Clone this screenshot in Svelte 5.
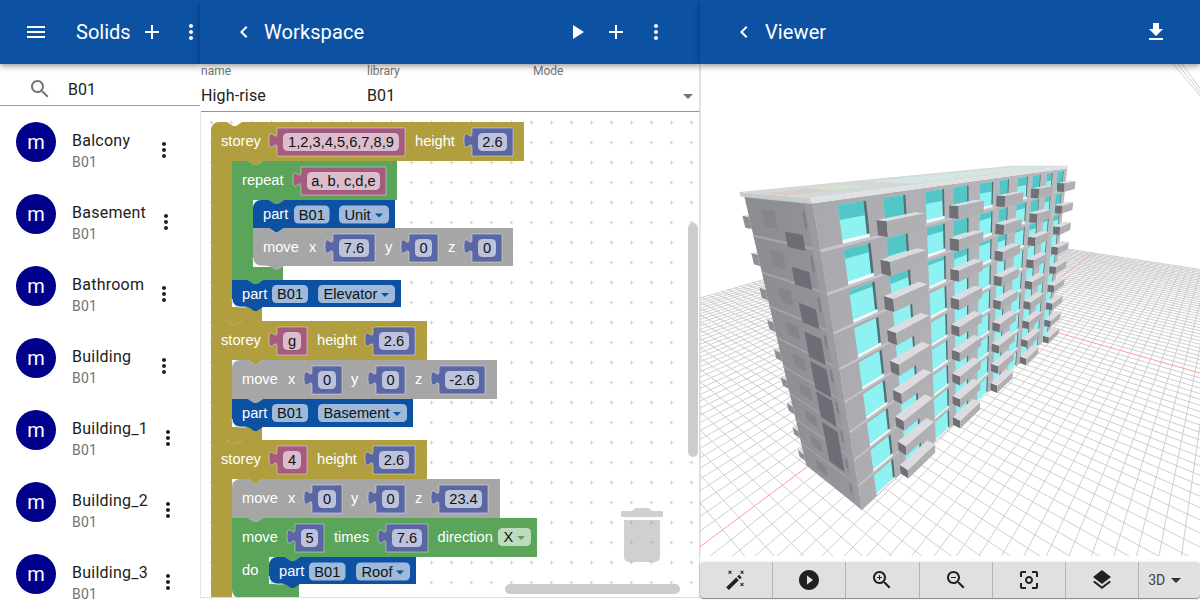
<script>
  const P = {
    menu: 'M3 18h18v-2H3v2zm0-5h18v-2H3v2zm0-7v2h18V6H3z',
    add: 'M19 13h-6v6h-2v-6H5v-2h6V5h2v6h6v2z',
    more: 'M12 8c1.1 0 2-.9 2-2s-.9-2-2-2-2 .9-2 2 .9 2 2 2zm0 2c-1.1 0-2 .9-2 2s.9 2 2 2 2-.9 2-2-.9-2-2-2zm0 6c-1.1 0-2 .9-2 2s.9 2 2 2 2-.9 2-2-.9-2-2-2z',
    back: 'M15.41 7.41L14 6l-6 6 6 6 1.41-1.41L10.83 12z',
    play: 'M8 5v14l11-7z',
    get: 'M19 9h-4V3H9v6H5l7 7 7-7zM5 18v2h14v-2H5z',
    search: 'M15.5 14h-.79l-.28-.27C15.41 12.59 16 11.11 16 9.5 16 5.91 13.09 3 9.5 3S3 5.91 3 9.5 5.91 16 9.5 16c1.61 0 3.09-.59 4.23-1.57l.27.28v.79l5 4.99L20.49 19l-4.99-5zm-6 0C7.01 14 5 11.99 5 9.5S7.01 5 9.5 5 14 7.01 14 9.5 11.99 14 9.5 14z',
    circle: 'M12 2C6.48 2 2 6.48 2 12s4.48 10 10 10 10-4.48 10-10S17.52 2 12 2zm-2 14.5v-9l6 4.5-6 4.5z',
    focus: 'M5 15H3v4c0 1.1.9 2 2 2h4v-2H5v-4zM5 5h4V3H5c-1.1 0-2 .9-2 2v4h2V5zm14-2h-4v2h4v4h2V5c0-1.1-.9-2-2-2zm0 16h-4v2h4c1.1 0 2-.9 2-2v-4h-2v4zM12 8c-2.21 0-4 1.79-4 4s1.79 4 4 4 4-1.79 4-4-1.79-4-4-4zm0 6c-1.1 0-2-.9-2-2s.9-2 2-2 2 .9 2 2-.9 2-2 2z',
    layers: 'M11.99 18.54l-7.37-5.73L3 14.07l9 7 9-7-1.63-1.27-7.38 5.74zM12 16l7.36-5.73L21 9l-9-7-9 7 1.63 1.27L12 16z',
    wand: 'M2.2 19.2l10-9.6 2.6 2.7-10 9.6zM13.2 8.6l1.9-1.8 2.6 2.7-1.9 1.8zM4.9 2.4l1.1 1.1 1.1-1.1.7.7-1.1 1.1 1.1 1.1-.7.7-1.1-1.1-1.1 1.1-.7-.7 1.1-1.1-1.1-1.1zM16.9 2.4l1.1 1.1 1.1-1.1.7.7-1.1 1.1 1.1 1.1-.7.7-1.1-1.1-1.1 1.1-.7-.7 1.1-1.1-1.1-1.1zM16.9 14.7l1.1 1.1 1.1-1.1.7.7-1.1 1.1 1.1 1.1-.7.7-1.1-1.1-1.1 1.1-.7-.7 1.1-1.1-1.1-1.1z'
  };
  const zoomIn = P.search + 'M12 10h-2v2H9v-2H7V9h2V7h1v2h2v1z';
  const zoomOut = P.search + 'M7 9h5v1H7z';
  const tools = [P.wand, P.circle, zoomIn, zoomOut, P.focus, P.layers];
  const solids = ['Balcony', 'Basement', 'Bathroom', 'Building', 'Building_1', 'Building_2', 'Building_3'];

  /* ---------- Blockly canvas ---------- */
  const topEdge = (x, y, w, round) =>
    (round ? `M${x},${y + 8} a8,8 0 0 1 8,-8 h8` : `M${x},${y} h16`) + ` l6,4 3,0 6,-4 H${x + w}`;
  const notch = (x) => `H${x + 31} l-6,4 -3,0 -6,-4`;
  const closeEdge = (x, y, round) => (round ? `H${x + 8} a8,8 0 0 1 -8,-8 Z` : `H${x} Z`);

  const stack = (c, x, y, w, h, rt, rb) => ({
    c, d: `${topEdge(x, y, w, rt)} V${y + h} ${notch(x)} ${closeEdge(x, y + h, rb)}`,
    arc: rb ? `M${x},${y + h - 8} a8,8 0 0 0 8,8 h6` : ''
  });
  const cblock = (c, x, y, w, hdr, ix, iy, fw, fy, rt, rb, foot = true) => ({
    c,
    d: `${topEdge(x, y, w, rt)} V${y + hdr} ${notch(ix)} H${ix} V${iy} H${x + fw} V${fy} ${foot ? notch(x) : ''} ${closeEdge(x, fy, rb)}`,
    arc: ''
  });
  const shapes = [
    cblock('olive', 211, 122, 313, 39, 232, 307, 51, 321, true, false),
    cblock('green', 232, 161, 165, 39, 253, 267, 51, 280, false, false),
    stack('blue', 253, 200, 142, 28, true, false),
    stack('gray', 253, 228, 260, 38, false, true),
    stack('blue', 232, 280, 169, 27, false, true),
    cblock('olive', 211, 321, 216, 39, 232, 427, 51, 440, false, false),
    stack('gray', 232, 360, 265, 39, true, false),
    stack('blue', 232, 399, 181, 28, false, true),
    cblock('olive', 211, 440, 216, 39, 232, 640, 51, 660, false, false),
    stack('gray', 232, 479, 268, 39, true, false),
    cblock('green', 232, 518, 305, 39, 269, 584, 67, 598, false, true, false),
    stack('blue', 269, 557, 147, 27, true, true)
  ];
  const valuePath = (x, y, w) =>
    `M${x},${y} H${x + w} V${y + 28} H${x} V${y + 20} c0,-10 -8,8 -8,-7.5 s8,2.5 8,-7.5 Z`;
  const val = (c, x, y, w, t) => ({ c, x, y, w, t, d: valuePath(x, y, w) });
  const values = [
    val('pink', 277, 128, 128, '1,2,3,4,5,6,7,8,9'), val('purple', 472, 128, 41, '2.6'),
    val('pink', 301, 167, 85, 'a, b, c,d,e'),
    val('purple', 333, 234, 42, '7.6'), val('purple', 409, 234, 29, '0'), val('purple', 472, 234, 30, '0'),
    val('pink', 277, 327, 30, 'g'), val('purple', 373, 327, 42, '2.6'),
    val('purple', 312, 366, 30, '0'), val('purple', 376, 366, 29, '0'), val('purple', 439, 366, 46, '-2.6'),
    val('pink', 277, 446, 30, '4'), val('purple', 373, 446, 42, '2.6'),
    val('purple', 312, 485, 30, '0'), val('purple', 376, 485, 29, '0'), val('purple', 439, 485, 49, '23.4'),
    val('purple', 295, 524, 29, '5'), val('purple', 386, 524, 42, '7.6')
  ];
  const lab = (x, y, t) => ({ x, y, t });
  const labels = [
    lab(221, 146, 'storey'), lab(415, 146, 'height'), lab(242, 185, 'repeat'),
    lab(263, 219, 'part'), lab(263, 252, 'move'), lab(309, 252, 'x'), lab(385, 252, 'y'), lab(448, 252, 'z'),
    lab(242, 299, 'part'), lab(221, 345, 'storey'), lab(317, 345, 'height'),
    lab(242, 384, 'move'), lab(288, 384, 'x'), lab(351, 384, 'y'), lab(415, 384, 'z'), lab(242, 418, 'part'),
    lab(221, 464, 'storey'), lab(317, 464, 'height'),
    lab(242, 503, 'move'), lab(288, 503, 'x'), lab(351, 503, 'y'), lab(415, 503, 'z'),
    lab(242, 542, 'move'), lab(334, 542, 'times'), lab(437.5, 542, 'direction'), lab(242, 575, 'do'), lab(279, 576, 'part')
  ];
  const fld = (c, x, y, w, t, arrow) => ({ c, x, y, w, t, arrow });
  const fields = [
    fld('fblue', 294, 205.5, 35.5, 'B01'), fld('fblue', 339, 205.5, 50, 'Unit', true),
    fld('fblue', 272, 285, 36, 'B01'), fld('fblue', 318, 285, 77, 'Elevator', true),
    fld('fblue', 272, 404, 36, 'B01'), fld('fblue', 318, 404, 89, 'Basement', true),
    fld('fgreen', 498, 528, 33, 'X', true),
    fld('fblue', 309, 562.5, 36.5, 'B01'), fld('fblue', 356, 562.5, 54, 'Roof', true)
  ];

  /* ---------- 3D viewer: projective ground grid ---------- */
  const O = [1006, 318], VA = [1240, 143], VB = [400, 146];
  const N = 40, aL = 0.592, bL = 0.453;
  const gp = (s, t) => {
    const a = (s / N) * aL, b = (t / N) * bL, w = a + b + 1;
    return [(a * VA[0] + b * VB[0] + O[0]) / w, (a * VA[1] + b * VB[1] + O[1]) / w];
  };
  const gridLines = [];
  for (let i = -N; i <= N; i++) {
    if (i === 0) continue;
    const sMin = -N * 0.98;
    gridLines.push([gp(i, sMin), gp(i, N)], [gp(sMin, i), gp(N, i)]);
  }
  const seg = (l) => `M${l[0][0].toFixed(1)},${l[0][1].toFixed(1)}L${l[1][0].toFixed(1)},${l[1][1].toFixed(1)}`;
  const gridD = gridLines.map(seg).join('');
  const redD = seg([gp(0, -N * 0.98), gp(0, N)]) + seg([gp(-N * 0.98, 0), gp(N, 0)]);

  /* ---------- 3D viewer: building ---------- */
  const B0 = [862, 510], BA = [1258, 142], BB = [434, 165], BZ = [966, 1159];
  const ka = 0.905, kb = 0.15, kc = -0.321;
  const pt = (u, v, h) => {
    const w = ka * u + kb * v + kc * h + 1;
    return [
      (ka * u * BA[0] + kb * v * BB[0] + kc * h * BZ[0] + B0[0]) / w,
      (ka * u * BA[1] + kb * v * BB[1] + kc * h * BZ[1] + B0[1]) / w
    ];
  };
  const poly = (list) => list.map((p) => pt(p[0], p[1], p[2]).map((n) => n.toFixed(1)).join(',')).join(' ');
  const faceV = (u0, u1, h0, h1, v = 0) => poly([[u0, v, h0], [u1, v, h0], [u1, v, h1], [u0, v, h1]]);
  const faceU = (v0, v1, h0, h1, u = 0) => poly([[u, v0, h0], [u, v1, h0], [u, v1, h1], [u, v0, h1]]);
  const faceH = (u0, u1, v0, v1, h) => poly([[u0, v0, h], [u1, v0, h], [u1, v1, h], [u0, v1, h]]);

  const cols = [[.043, .095], [.14, .19], [.253, .307], [.345, .398], [.452, .506], [.545, .586], [.642, .697], [.735, .783], [.835, .873], [.92, .965]];
  const F = 9;
  const backB = [], side = [], win = [], bal = [];

  const box = (arr, u0, u1, v0, v1, h0, h1, dark, front, top) => {
    arr.push({ p: faceU(v0, v1, h0, h1, u0), f: dark });
    arr.push({ p: faceV(u0, u1, h0, h1, v0), f: front });
    arr.push({ p: faceH(u0, u1, v0, v1, h1), f: top });
  };
  for (let k = 0; k < F; k++) {
    box(backB, 0.0, 0.09, 1, 1.12, k / F + 0.02, k / F + 0.055, '#8f8f94', '#bcbcc1', '#dedee2');
    const h0 = k / F, h1 = (k + 1) / F;
    side.push({ p: faceU(0.55, 0.75, h0 + 0.035, h1 - 0.03), f: '#85868c' });
    side.push({ p: faceU(0.12, 0.15, h0 + 0.05, h1 - 0.02), f: '#7d7e84' });
    side.push({ p: faceU(0, 1, h1 - 0.003, h1 + 0.004), f: '#a4a5aa' });
  }
  const dark = [[.88, .92], [.775, .825], [.66, .72], [.545, .63], [.43, .53], [.32, .42], [.21, .30], [.13, .21]];
  dark.forEach((d) => side.push({ p: faceU(0.2, 0.45, d[0], d[1]), f: '#6c6d75' }));

  cols.forEach((c, i) => {
    for (let k = 0; k < F; k++) {
      const h0 = k / F + 0.014, h1 = (k + 1) / F - 0.012;
      win.push({ p: faceV(c[0], c[1], h0, h1), f: '#8ef2f3' });
      const depth = k >= 6 ? (k - 5) * (i % 2 ? 0.3 : 0.14) : 0;
      if (depth) win.push({ p: faceV(c[0], c[1], h1 - (h1 - h0) * depth, h1), f: '#53c6c8' });
      win.push({ p: faceV(c[1], c[1] + 0.006, h0, h1), f: '#4b7378' });
      win.push({ p: faceV(c[0], c[1] + 0.006, h0 - 0.01, h0), f: '#eefdfd' });
    }
  });
  const balU = [.925, .73, .53, .33, .12];
  balU.forEach((u) => {
    for (let k = 0; k < F; k++) {
      const t = k / F + 0.045;
      box(bal, u, u + 0.1, -0.12, 0, t - 0.042, t, '#707075', '#afafb4', '#dcdce0');
    }
  });

  const sideFace = faceU(0, 1, 0, 1);
  const sideEdge = faceU(0, 0.1, 0, 1);
  const longFace = faceV(0, 1, 0, 1);
  const roofTop = faceH(-0.005, 1, -0.01, 1.02, 1.012);
  const roofFront = faceV(-0.005, 1, 1, 1.012, -0.01);
  const roofSide = faceU(-0.01, 1.02, 1, 1.012, -0.005);
  const roofPink = faceH(0.0, 0.09, 0.32, 0.68, 1.012);
  const roofGreen = faceH(0.09, 0.17, 0.35, 0.75, 1.012);
  const roofCyan = faceH(0.25, 0.95, 0.1, 0.8, 1.012);
  const floorLines = [];
  for (let k = 1; k < F; k++) floorLines.push(faceV(0, 1, k / F - 0.004, k / F + 0.004));
</script>

<div class="app">
  <section class="col left">
    <header class="bar">
      <svg class="ic" viewBox="0 0 24 24"><path d={P.menu} /></svg>
      <span class="title solids">Solids</span>
      <svg class="ic add" viewBox="0 0 24 24"><path d={P.add} /></svg>
      <svg class="ic kebab" viewBox="0 0 24 24"><path d={P.more} /></svg>
    </header>
    <div class="search">
      <svg class="ic sicon" viewBox="0 0 24 24"><path d={P.search} /></svg>
      <span>B01</span>
    </div>
    <ul class="list">
      {#each solids as s}
        <li>
          <div class="avatar">m</div>
          <div class="txt">
            <div class="t1">{s}</div>
            <div class="t2">B01</div>
          </div>
          <svg class="ic more" viewBox="0 0 24 24"><path d={P.more} /></svg>
        </li>
      {/each}
    </ul>
  </section>

  <section class="col mid">
    <header class="bar">
      <svg class="ic" viewBox="0 0 24 24"><path d={P.back} /></svg>
      <span class="title">Workspace</span>
      <span class="spacer"></span>
      <div class="acts">
        <svg class="ic first" viewBox="0 0 24 24"><path d={P.play} /></svg>
        <svg class="ic" viewBox="0 0 24 24"><path d={P.add} /></svg>
        <svg class="ic" viewBox="0 0 24 24"><path d={P.more} /></svg>
      </div>
    </header>
    <div class="form">
      <div class="field"><label for="n">name</label><div id="n" class="v">High-rise</div></div>
      <div class="field"><label for="l">library</label><div id="l" class="v">B01</div></div>
      <div class="field"><label for="m">Mode</label><div id="m" class="v"></div><i class="caret"></i></div>
    </div>
    <div class="canvas">
      <svg class="blocks" viewBox="201 112 499 485">
        <defs>
          <pattern id="dots" x="9" y="0" width="20" height="20" patternUnits="userSpaceOnUse">
            <rect x="0.5" y="2" width="4" height="1" fill="#d2d2d2" />
            <rect x="2" y="0.5" width="1" height="4" fill="#d2d2d2" />
          </pattern>
        </defs>
        <rect x="201" y="112" width="499" height="485" fill="url(#dots)" />
        {#each shapes as s}
          <path class={s.c} d={s.d} />
          {#if s.arc}<path class="arc" d={s.arc} />{/if}
        {/each}
        {#each values as v}
          <path class="val {v.c}" d={v.d} />
          <rect class="f{v.c}" x={v.x + 6} y={v.y + 5} width={v.w - 12} height="18" rx="4.5" />
          <text class="dark mid-t" x={v.x + v.w / 2} y={v.y + 19}>{v.t}</text>
        {/each}
        {#each fields as f}
          <rect class={f.c} x={f.x} y={f.y} width={f.w} height="18" rx="4.5" />
          {#if f.arrow}
            <text class="dark" x={f.x + 5.5} y={f.y + 14}>{f.t}</text>
            <path class={f.c === 'fgreen' ? 'green' : 'blue'} d="M{f.x + f.w - 14},{f.y + 8} h8 l-4,4 z" />
          {:else}
            <text class="dark mid-t" x={f.x + f.w / 2} y={f.y + 14}>{f.t}</text>
          {/if}
        {/each}
        {#each labels as l}
          <text class="white" x={l.x} y={l.y}>{l.t}</text>
        {/each}
        <g class="trash">
          <path d="M621,511 H632 q2,-3 5,-3 h10 q3,0 5,3 H663 V517 H621 Z" />
          <path d="M624,520 H660 V557 a5,5 0 0 1 -5,5 H629 a5,5 0 0 1 -5,-5 Z" />
        </g>
        <rect class="scroll" x="688" y="223" width="10" height="234" rx="5" />
        <rect class="scroll" x="505" y="584" width="175" height="10" rx="5" />
      </svg>
    </div>
  </section>

  <section class="col right">
    <header class="bar">
      <svg class="ic" viewBox="0 0 24 24"><path d={P.back} /></svg>
      <span class="title viewer">Viewer</span>
      <span class="spacer"></span>
      <svg class="ic" viewBox="0 0 24 24"><path d={P.get} /></svg>
    </header>
    <div class="scene">
      <svg viewBox="700 64 500 492">
        <defs>
          <linearGradient id="lf" x1="0" x2="1" y1="0" y2="0">
            <stop offset="0" stop-color="#a8a8ad" />
            <stop offset="1" stop-color="#bcbcc0" />
          </linearGradient>
          <linearGradient id="sf" x1="0" x2="1" y1="0" y2="0">
            <stop offset="0" stop-color="#8b8c92" />
            <stop offset="1" stop-color="#96979c" />
          </linearGradient>
        </defs>
        <path class="grid" d={gridD} />
        <path class="redline" d={redD} />
        {#each backB as b}<polygon points={b.p} fill={b.f} />{/each}
        <polygon points={sideFace} fill="url(#sf)" />
        {#each side as b}<polygon points={b.p} fill={b.f} />{/each}
        <polygon points={sideEdge} fill="#9d9ea3" opacity=".75" />
        <polygon points={longFace} fill="url(#lf)" />
        {#each floorLines as f}<polygon points={f} fill="#c4c4c9" />{/each}
        {#each win as b}<polygon points={b.p} fill={b.f} />{/each}
        {#each bal as b}<polygon points={b.p} fill={b.f} />{/each}
        <polygon points={roofTop} fill="#d2d9d8" />
        <polygon points={roofCyan} fill="#d3e6e4" />
        <polygon points={roofPink} fill="#dccbc9" />
        <polygon points={roofGreen} fill="#d5e2cd" />
        <polygon points={roofFront} fill="#dfe2e3" />
        <polygon points={roofSide} fill="#c8cacc" />
      </svg>
    </div>
    <div class="tools">
      {#each tools as t}
        <button><svg class="ic" viewBox="0 0 24 24"><path d={t} /></svg></button>
      {/each}
      <button class="mode"><span>3D</span><i></i></button>
    </div>
  </section>
</div>

<style>
  :global(body) {
    margin: 0;
    overflow: hidden;
    background: #fff;
  }
  .app {
    display: flex;
    width: 1200px;
    height: 600px;
    overflow: hidden;
    font-family: Roboto, "Liberation Sans", sans-serif;
    color: #212121;
  }
  .col {
    display: flex;
    flex-direction: column;
    height: 600px;
    flex: none;
  }
  .left { width: 200px; }
  .mid { width: 500px; }
  .right { width: 500px; }
  .bar {
    flex: none;
    height: 64px;
    display: flex;
    align-items: center;
    background: #0d51a3;
    color: #fff;
    position: relative;
    box-shadow: 0 2px 4px -1px rgba(0, 0, 0, .2), 0 4px 5px rgba(0, 0, 0, .14), 0 1px 10px rgba(0, 0, 0, .12);
    padding-left: 32px;
  }
  .left .bar { padding-left: 24px; z-index: 1; }
  .mid .bar { z-index: 2; }
  .right .bar { z-index: 3; padding-right: 32px; }
  .ic {
    width: 24px;
    height: 24px;
    flex: none;
    fill: currentColor;
    display: block;
  }
  .title {
    font-size: 20px;
    margin-left: 8px;
    letter-spacing: .1px;
  }
  .solids { margin-left: 28px; letter-spacing: 0; }
  .viewer { margin-left: 9px; }
  .add { margin-left: 9px; }
  .kebab { margin-left: 15px; }
  .spacer { flex: 1; }
  .acts {
    display: flex;
    gap: 16px;
    padding-right: 32px;
  }
  .first { margin-right: -1px; }
  .search {
    flex: none;
    height: 41px;
    display: flex;
    align-items: center;
    border-bottom: 1px solid #9a9a9a;
    font-size: 16px;
  }
  .search span { margin-left: 16px; padding-top: 10px; }
  .sicon {
    margin-left: 28px;
    margin-top: 9px;
    color: #757575;
  }
  .list {
    list-style: none;
    margin: 0;
    padding: 0;
    flex: 1;
    overflow: hidden;
  }
  .list li {
    height: 72px;
    display: flex;
    align-items: center;
    padding: 0 24px 0 16px;
    width: 160px;
  }
  .avatar {
    width: 40px;
    height: 40px;
    border-radius: 50%;
    background: #00008b;
    color: #fff;
    font-size: 20px;
    display: flex;
    align-items: center;
    justify-content: center;
    flex: none;
    margin-right: 16px;
  }
  .txt {
    flex: 1 0 auto;
    margin-right: 8px;
    margin-top: 16px;
  }
  .t1 { font-size: 16px; line-height: 24px; margin-bottom: -1px; letter-spacing: .25px; }
  .t2 { font-size: 14px; line-height: 20px; color: #757575; letter-spacing: .25px; }
  .more { margin-top: 16px; color: #212121; }
  .form {
    flex: none;
    height: 47px;
    margin-left: 1px;
    display: grid;
    grid-template-columns: 166px 166px 1fr;
    border-bottom: 1px solid #949494;
    border-right: 1px solid #ddd;
  }
  .field { position: relative; }
  .field label {
    display: block;
    font-size: 12px;
    line-height: 14px;
    color: #757575;
  }
  .v { font-size: 16px; line-height: 20px; margin-top: 8px; letter-spacing: .15px; }
  .caret {
    position: absolute;
    right: 6px;
    top: 30px;
    border: 5px solid transparent;
    border-top-color: #757575;
    border-bottom: 0;
  }
  .canvas {
    flex: 1;
    border-right: 1px solid #ddd;
    border-left: 1px solid #e4e4e4;
    border-bottom: 1px solid #ddd;
    margin-bottom: 2px;
    min-height: 0;
    background: #fff;
  }
  .blocks {
    display: block;
    width: 499px;
    height: 485px;
    font-family: "Liberation Sans", Arial, sans-serif;
    font-size: 14.67px;
  }
  .olive { fill: #b19f3f; }
  .green { fill: #5ba55b; }
  .blue { fill: #0d51a3; }
  .gray { fill: #a6a6a6; }
  .pink { fill: #a55b80; }
  .purple { fill: #5b67a5; }
  .val { stroke: rgba(255, 255, 255, .4); stroke-width: 1; }
  .arc { fill: none; stroke: rgba(255, 255, 255, .8); stroke-width: 1; }
  .fpink { fill: #dbbdcc; }
  .fpurple { fill: #bdc2db; }
  .fblue { fill: #9eb9d9; }
  .fgreen { fill: #bddbbd; }
  .white { fill: #fff; }
  .dark { fill: #111; }
  .mid-t { text-anchor: middle; }
  .trash { fill: #999; opacity: .45; }
  .scroll { fill: #ccc; }
  .scene {
    flex: none;
    height: 492px;
    border-left: 1px solid #e8e8e8;
    box-sizing: border-box;
  }
  .scene svg {
    display: block;
    width: 500px;
    height: 492px;
    margin-left: -1px;
  }
  .grid { fill: none; stroke: #c9c9c9; stroke-width: .9; }
  .redline { fill: none; stroke: #ff9c9c; stroke-width: 1; }
  .tools {
    flex: none;
    height: 36px;
    margin-top: 6px;
    display: flex;
    background: #e0e0e0;
    border-radius: 4px;
    box-shadow: 0 1px 1px rgba(0, 0, 0, .45), 0 0 3px rgba(0, 0, 0, .12);
    overflow: hidden;
  }
  .tools button {
    flex: none;
    width: 73.2px;
    height: 36px;
    border: 0;
    padding: 0;
    background: none;
    border-right: 1px solid #b4b4b4;
    box-sizing: border-box;
    color: #212121;
    display: flex;
    align-items: center;
    justify-content: center;
  }
  .tools button.mode {
    flex: 1;
    border-right: 0;
    font-family: Roboto, sans-serif;
    font-size: 14px;
    color: #444;
    gap: 6px;
    justify-content: flex-start;
    padding-left: 9px;
  }
  .mode i {
    border: 5px solid transparent;
    border-top-color: #333;
    border-bottom: 0;
  }
</style>
